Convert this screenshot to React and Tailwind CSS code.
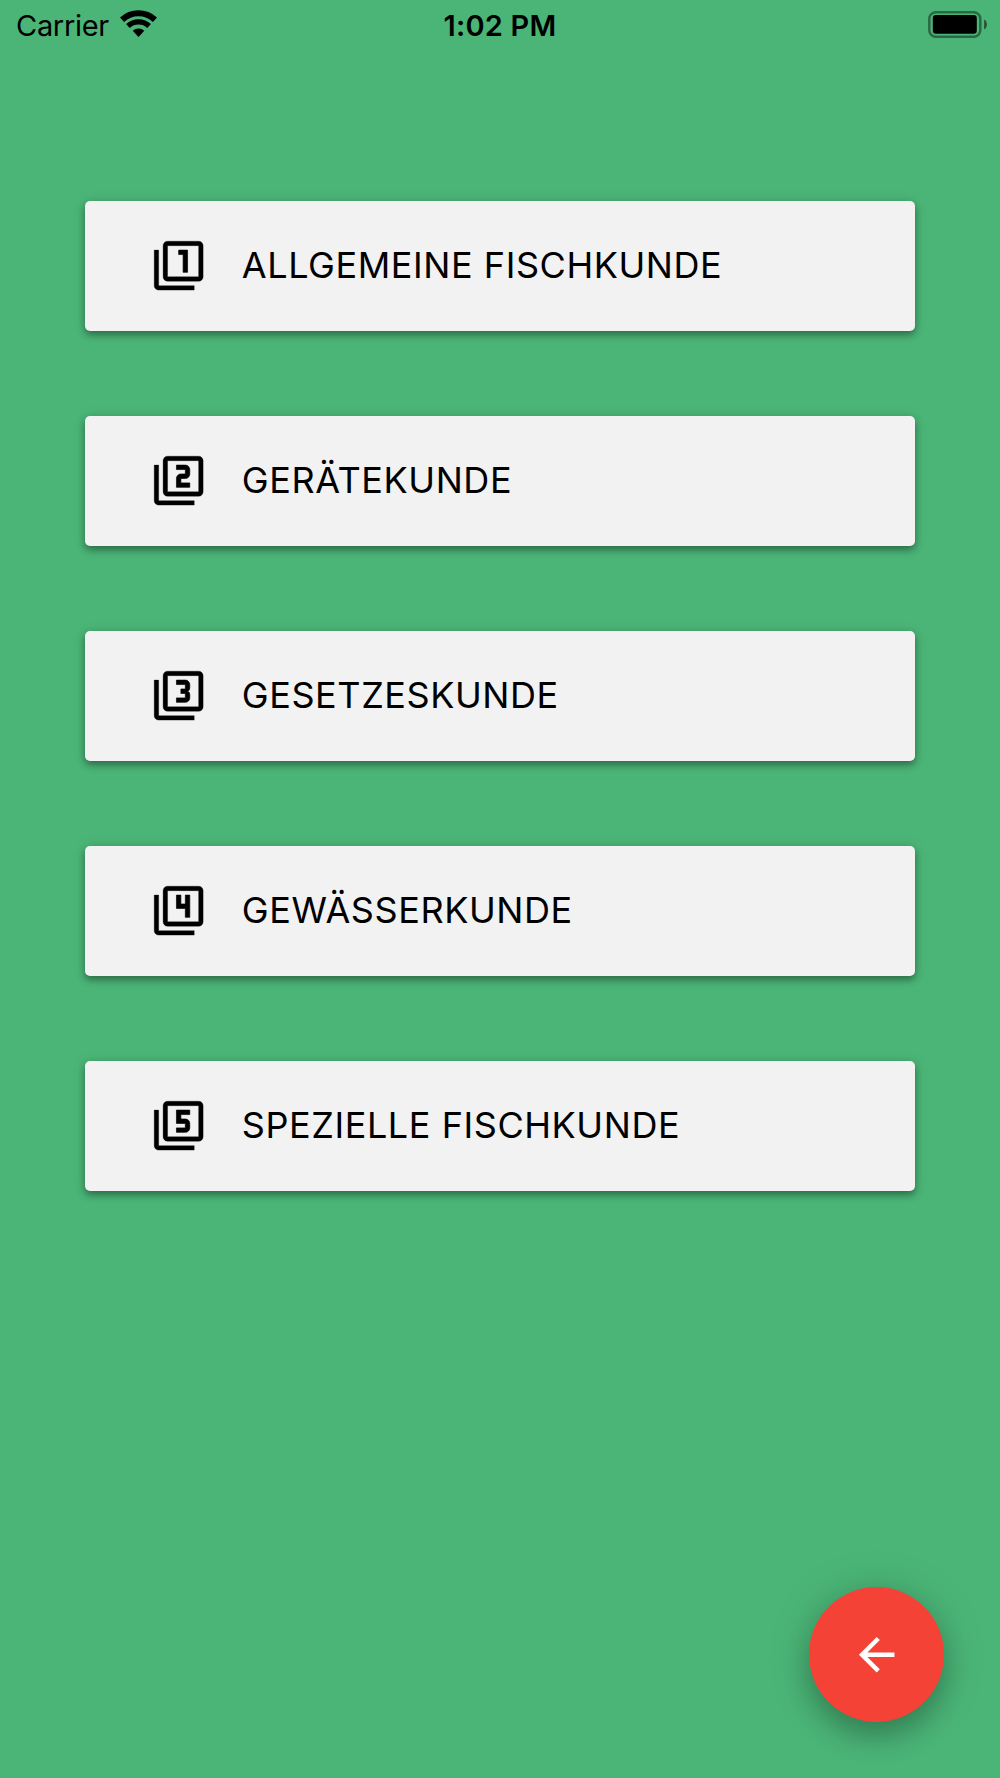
import { MdArrowBack } from "react-icons/md";

const topics = [
  { label: "ALLGEMEINE FISCHKUNDE", digit: "M14 15h2V5h-4v2h2v8z" },
  {
    label: "GERÄTEKUNDE",
    digit: "M17 13h-4v-2h2a2 2 0 0 0 2-2V7a2 2 0 0 0-2-2h-4v2h4v2h-2a2 2 0 0 0-2 2v4h6v-2z",
  },
  {
    label: "GESETZESKUNDE",
    digit: "M17 13v-1.5a1.5 1.5 0 0 0-1.5-1.5A1.5 1.5 0 0 0 17 8.5V7a2 2 0 0 0-2-2h-4v2h4v2h-2v2h2v2h-4v2h4a2 2 0 0 0 2-2z",
  },
  { label: "GEWÄSSERKUNDE", digit: "M15 15h2V5h-2v4h-2V5h-2v6h4v4z" },
  {
    label: "SPEZIELLE FISCHKUNDE",
    digit: "M17 13v-2a2 2 0 0 0-2-2h-2V7h4V5h-6v6h4v2h-4v2h4a2 2 0 0 0 2-2z",
  },
];

function NumberIcon({ digit }) {
  return (
    <svg className="size-[53.33px] shrink-0" viewBox="0 0 24 24" fill="currentColor" stroke="currentColor" strokeWidth="0.15">
      <path d="M3 5v16h16v2H3a2 2 0 0 1-2-2V5h2z" />
      <path d="M21 17H7V3h14v14zm0-16H7a2 2 0 0 0-2 2v14a2 2 0 0 0 2 2h14a2 2 0 0 0 2-2V3a2 2 0 0 0-2-2z" />
      <path d={digit} strokeWidth="0.3" />
    </svg>
  );
}

function WifiIcon() {
  return (
    <svg className="ml-[11px] h-[27px] w-[37px]" viewBox="0 0 37 27" fill="none">
      <path d="M2 9.7a24.3 24.3 0 0 1 33 0" stroke="black" strokeWidth="6" />
      <path d="M7.9 16a15.6 15.6 0 0 1 21.2 0" stroke="black" strokeWidth="5.3" />
      <path d="M18.5 27l-5.8-6.2a8.5 8.5 0 0 1 11.6 0z" fill="black" />
    </svg>
  );
}

function BatteryIcon() {
  return (
    <svg className="h-[27px] w-[60px]" viewBox="0 0 60 27">
      <rect x="1.3" y="1.2" width="51" height="24.6" rx="6.6" fill="none" stroke="black" strokeOpacity="0.42" strokeWidth="2.5" />
      <rect x="4.8" y="4" width="44" height="18.8" rx="3" fill="black" />
      <path d="M56 8.5c4 1.6 4 8.4 0 10z" fill="black" fillOpacity="0.5" />
    </svg>
  );
}

function StatusBar() {
  return (
    <header className="grid h-[53px] grid-cols-3 px-4">
      <div className="flex items-start">
        <span className="pt-[8px] text-[29px] leading-[35px] tracking-[-0.3px]">Carrier</span>
        <span className="pt-[10px]"><WifiIcon /></span>
      </div>
      <div className="pt-[8px] text-center text-[29px] leading-[35px] font-semibold tracking-[0.2px]">1:02 PM</div>
      <div className="-mr-1 flex justify-end pt-[11px]"><BatteryIcon /></div>
    </header>
  );
}

export default function App() {
  return (
    <div className="flex h-[1778px] w-[1000px] flex-col bg-[#4bb577] font-['Inter',sans-serif] text-black">
      <StatusBar />
      <main className="flex flex-col gap-[85px] px-[85.33px] pt-[148px]">
        {topics.map(({ label, digit }) => (
          <button
            key={label}
            className="flex h-[130px] items-center rounded-[5px] bg-[#f2f2f2] pb-[0.6px] pl-[66.67px] text-left shadow-[0_4px_7px_rgba(0,0,0,0.34),0_1px_14px_rgba(0,0,0,0.12)]"
          >
            <NumberIcon digit={digit} />
            <span className="ml-[36.5px] pb-[2px] text-[36px] leading-[44px] tracking-[0.57px] whitespace-nowrap">{label}</span>
          </button>
        ))}
      </main>
      <footer className="mt-auto flex justify-end pr-[55.67px] pb-[55.67px]">
        <button className="flex size-[135px] items-center justify-center rounded-full bg-[#f44336] text-white shadow-[0_16px_27px_rgba(0,0,0,0.2),0_3px_44px_rgba(0,0,0,0.17)]">
          <MdArrowBack className="size-[53.33px]" />
        </button>
      </footer>
    </div>
  );
}
